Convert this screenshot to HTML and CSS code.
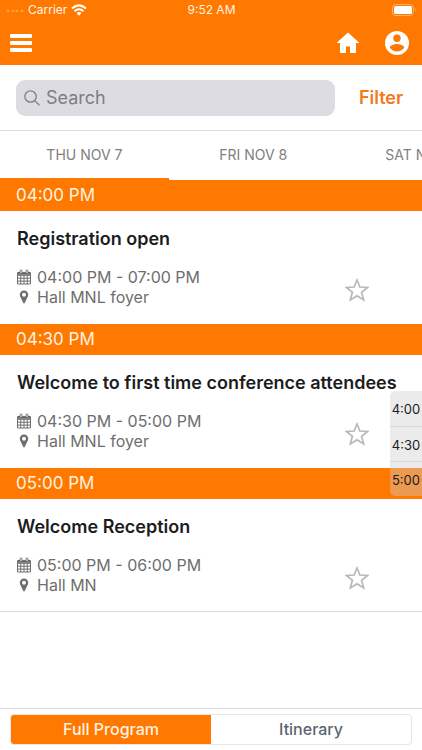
FILE: index.html
```html
<!DOCTYPE html>
<html lang="en">
<head>
<meta charset="utf-8">
<meta name="viewport" content="width=device-width, initial-scale=1">
<title>Conference program</title>
<link rel="stylesheet" href="styles.css">
</head>
<body>
<svg class="sprite" aria-hidden="true">
  <symbol id="calendar" viewBox="0 0 14 16">
    <path fill="none" stroke="currentColor" stroke-width="1" d="M.5 3.5h13v11.500H.5zM.5 6.300h13M.5 9.200h13M.5 12.100h13M3.700 6v9M7 6v9M10.300 6v9"/>
    <path fill="currentColor" d="M.5 3.500h13v2.300H.5z"/>
    <path fill="#fff" stroke="currentColor" d="M3 4.500V2a1 1 0 0 1 2 0v2.500zM9 4.500V2a1 1 0 0 1 2 0v2.500z"/>
  </symbol>
  <symbol id="pin" viewBox="0 0 14 16">
    <path fill="currentColor" fill-rule="evenodd" d="M7 1.500a4.200 4.200 0 0 0-4.200 4.200c0 .8.200 1.500.5 2.100l3 6.200c.3.600 1.100.6 1.400 0l3-6.200c.3-.6.500-1.300.5-2.100A4.200 4.200 0 0 0 7 1.500zm0 2.200a2 2 0 1 1 0 4 2 2 0 0 1 0-4z"/>
  </symbol>
  <symbol id="star" viewBox="0 0 24 24">
    <path fill="none" stroke="currentColor" stroke-width="1.700" d="M12 2l2.900 7 7.600.5-5.900 4.800 2 7.600L12 17.700l-6.600 4.200 2-7.600L1.500 9.500l7.600-.5z"/>
  </symbol>
</svg>

<header class="header">
  <div class="status">
    <div class="status-carrier">
      <svg width="18" height="4" viewBox="0 0 18 4" fill="#ffa14d" aria-hidden="true"><circle cx="2" cy="3" r="1.500"/><circle cx="7" cy="3" r="1.500"/><circle cx="11" cy="3" r="1.500"/><circle cx="16" cy="3" r="1.500"/></svg>
      <span>Carrier</span>
      <svg width="16" height="12" viewBox="0 0 16 12" aria-hidden="true"><g fill="none" stroke="#fff" stroke-width="2"><path d="M1 4.500Q8-1.700 15 4.500"/><path d="M3.500 7.200Q8 3.200 12.500 7.200"/></g><path fill="#fff" d="M5.500 9Q8 7 10.500 9L8 11.700z"/></svg>
    </div>
    <span class="status-time">9:52 AM</span>
    <div class="status-battery">
      <svg width="25" height="12" viewBox="0 0 25 12" aria-hidden="true"><rect x=".5" y=".5" width="21" height="11" rx="3" fill="none" stroke="#ffb16a"/><rect x="2" y="2" width="18" height="8" rx="1.500" fill="#fff"/><path fill="#ffc48f" d="M23 4q1.500 2 0 4z"/></svg>
    </div>
  </div>
  <div class="toolbar">
    <button class="icon-button" type="button" aria-label="Menu">
      <svg width="22" height="18" viewBox="0 0 22 18" fill="#fff"><rect width="22" height="4" rx="1"/><rect y="7" width="22" height="4" rx="1"/><rect y="14" width="22" height="4" rx="1"/></svg>
    </button>
    <div class="toolbar-actions">
      <button class="icon-button" type="button" aria-label="Home">
        <svg width="24" height="22" viewBox="0 0 24 22" fill="#fff"><path d="M12 .5L.5 11H4v10h6v-6.500h4V21h6V11h3.500z"/></svg>
      </button>
      <button class="icon-button" type="button" aria-label="Account">
        <svg width="24" height="24" viewBox="0 0 24 24"><circle cx="12" cy="12" r="12" fill="#fff"/><circle cx="12" cy="7.300" r="3.700" fill="#ff7800"/><path fill="#ff7800" d="M4.800 16.800c0-2.500 4.800-3.700 7.200-3.700s7.200 1.200 7.200 3.700a8.700 8.700 0 0 1-14.400 0z"/></svg>
      </button>
    </div>
  </div>
</header>

<form class="search" role="search">
  <label class="search-field">
    <svg width="16" height="16" viewBox="0 0 16 16" fill="none" stroke="#7d7d82" stroke-width="1.300" aria-hidden="true"><circle cx="6.500" cy="6.500" r="5.700"/><path d="M10.600 10.600l4.900 4.700"/></svg>
    <input type="text" placeholder="Search" aria-label="Search">
  </label>
  <button class="filter" type="button">Filter</button>
</form>

<nav class="days" aria-label="Days">
  <a class="day day-current" href="#nov7" aria-current="date">THU NOV 7</a>
  <a class="day" href="#nov8">FRI NOV 8</a>
  <a class="day" href="#nov9">SAT NOV 9</a>
</nav>

<main class="program">
  <section>
    <h2 class="slot">04:00 PM</h2>
    <article class="session">
      <h3>Registration open</h3>
      <div class="session-body">
        <div class="session-details">
          <p><svg width="14" height="16"><use href="#calendar"/></svg>04:00 PM - 07:00 PM</p>
          <p><svg width="14" height="16"><use href="#pin"/></svg>Hall MNL foyer</p>
        </div>
        <button class="star" type="button" aria-label="Add Registration open to itinerary"><svg width="24" height="24"><use href="#star"/></svg></button>
      </div>
    </article>
  </section>
  <section>
    <h2 class="slot">04:30 PM</h2>
    <article class="session">
      <h3>Welcome to first time conference attendees</h3>
      <div class="session-body">
        <div class="session-details">
          <p><svg width="14" height="16"><use href="#calendar"/></svg>04:30 PM - 05:00 PM</p>
          <p><svg width="14" height="16"><use href="#pin"/></svg>Hall MNL foyer</p>
        </div>
        <button class="star" type="button" aria-label="Add Welcome to first time conference attendees to itinerary"><svg width="24" height="24"><use href="#star"/></svg></button>
      </div>
    </article>
  </section>
  <section>
    <h2 class="slot">05:00 PM</h2>
    <article class="session">
      <h3>Welcome Reception</h3>
      <div class="session-body">
        <div class="session-details">
          <p><svg width="14" height="16"><use href="#calendar"/></svg>05:00 PM - 06:00 PM</p>
          <p><svg width="14" height="16"><use href="#pin"/></svg>Hall MN</p>
        </div>
        <button class="star" type="button" aria-label="Add Welcome Reception to itinerary"><svg width="24" height="24"><use href="#star"/></svg></button>
      </div>
    </article>
  </section>
  <nav class="time-index" aria-label="Jump to time">
    <a href="#t400">4:00</a>
    <a href="#t430">4:30</a>
    <a href="#t500">5:00</a>
  </nav>
</main>

<footer class="footer">
  <div class="segments">
    <button class="segment segment-on" type="button" aria-pressed="true">Full Program</button>
    <button class="segment" type="button" aria-pressed="false">Itinerary</button>
  </div>
</footer>
</body>
</html>
```
FILE: styles.css
```css
* { box-sizing: border-box; }

body {
  margin: 0;
  min-height: 100vh;
  display: flex;
  flex-direction: column;
  background: #fff;
  color: #1c1c1e;
  font-family: Inter, "Liberation Sans", sans-serif;
  font-size: 16px;
  line-height: 20px;
}

h2, h3, p { margin: 0; }
a { color: inherit; text-decoration: none; }
button {
  padding: 0;
  border: 0;
  background: none;
  color: inherit;
  font: inherit;
}
svg { display: block; flex: none; }
.sprite { position: absolute; width: 0; height: 0; }

.header { background: #ff7800; color: #fff; }

.status {
  display: grid;
  grid-template-columns: 1fr auto 1fr;
  align-items: center;
  height: 20px;
  padding: 0 5px 0 6px;
  font-size: 12px;
  color: #fff3e6;
}
.status-carrier { display: flex; align-items: center; gap: 4px; }
.status-battery { display: flex; justify-content: flex-end; }

.toolbar {
  display: flex;
  align-items: center;
  justify-content: space-between;
  height: 45px;
  padding: 0 13px 0 10px;
}
.toolbar-actions { display: flex; align-items: center; gap: 25px; }

.search {
  display: flex;
  align-items: center;
  gap: 23px;
  height: 66px;
  padding: 0 18px 0 16px;
  border-bottom: 1px solid #dcdce0;
}
.search-field {
  display: flex;
  align-items: center;
  flex: 1;
  min-width: 0;
  gap: 6px;
  height: 36px;
  padding: 0 8px;
  border-radius: 9px;
  background: #dddce2;
}
.search-field input {
  flex: 1;
  min-width: 0;
  padding: 0;
  border: 0;
  outline: 0;
  background: none;
  font: inherit;
  font-size: 18px;
}
.search-field input::placeholder { color: #7d7d82; opacity: 1; }
.filter {
  flex: none;
  min-width: 46px;
  color: #f27a1a;
  font-size: 18px;
  font-weight: 600;
}

.days { display: flex; overflow: hidden; height: 49px; }
.day {
  display: flex;
  align-items: center;
  justify-content: center;
  flex: 0 0 40%;
  border-bottom: 2px solid transparent;
  color: #808080;
  font-size: 14px;
}
.day-current { border-color: #ff7800; }

.program { position: relative; flex: 1; }
.slot {
  padding: 0 16px;
  background: #ff7800;
  color: #fff3e0;
  font-size: 17px;
  font-weight: 400;
  line-height: 31px;
}
.session { padding: 16px 17px 17px; }
section:last-of-type .session { border-bottom: 1px solid #dcdce0; padding-bottom: 16px; }
.session h3 {
  margin-bottom: 16px;
  font-size: 18px;
  font-weight: 600;
  line-height: 24px;
}
.session-body { display: flex; justify-content: space-between; }
.session-details { color: #6e6e6e; }
.session-details p { display: flex; align-items: center; gap: 6px; }
.star { align-self: center; margin-right: 36px; padding-top: 6px; color: #b8b8b8; }

.time-index {
  position: absolute;
  top: 211px;
  right: 0;
  width: 32px;
  border-radius: 5px 0 0 5px;
  background: rgba(205, 205, 205, 0.4);
  color: #1c1c1e;
  font-size: 13px;
  line-height: 36px;
  text-align: center;
}
.time-index a { display: block; height: 35px; }
.time-index a + a { border-top: 1px solid rgba(190, 190, 190, 0.4); }

.footer {
  padding: 5px 10px;
  border-top: 1px solid #dcdce0;
}
.segments {
  display: flex;
  height: 31px;
  border: 1px solid #e6e6e8;
  border-radius: 4px;
  overflow: hidden;
}
.segment { flex: 1; padding-bottom: 2px; color: #5b6472; font-weight: 500; }
.segment-on { background: #ff7800; color: #fff3e0; }
```
